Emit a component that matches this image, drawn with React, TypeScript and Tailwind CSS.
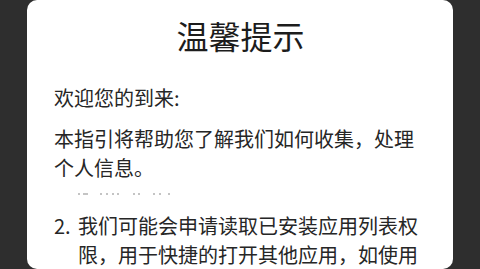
const dots = [
  { x: 78, w: 2 },
  { x: 83, w: 5 },
  { x: 100, w: 2 },
  { x: 106, w: 2 },
  { x: 112, w: 2 },
  { x: 117, w: 2 },
  { x: 133, w: 2 },
  { x: 138, w: 2 },
  { x: 153, w: 2 },
  { x: 159, w: 2 },
  { x: 168, w: 2 },
];

export default function App() {
  return (
    <div
      className="w-[480px] h-[269px] bg-[#2e2e2e] flex justify-center overflow-hidden"
      style={{ fontFamily: '"Noto Sans CJK SC", "Noto Sans", sans-serif' }}
    >
      <div className="w-[426px] h-[269px] bg-white rounded-[10px] overflow-hidden flex flex-col pl-[27px] pr-[26px]">
        {/* Title */}
        <h1 className="mt-[15px] h-[40px] leading-[40px] text-[32px] text-center text-[#1c1c1c] font-normal">
          温馨提示
        </h1>

        <div className="mt-[28px] text-[20px] leading-[29.5px] text-[#262626]">
          <p>欢迎您的到来:</p>
          <p className="mt-[11px]">本指引将帮助您了解我们如何收集，处理个人信息。</p>

          {/* faded line, mostly hidden */}
          <div className="relative h-[28px]">
            {dots.map((d, i) => (
              <span
                key={i}
                className="absolute top-[10px] h-[2px] bg-[#c4c4c4]"
                style={{ left: d.x - 54, width: d.w }}
              />
            ))}
          </div>

          <div className="flex leading-[29px]">
            <span className="w-[24px] shrink-0">2.</span>
            <p>我们可能会申请读取已安装应用列表权限，用于快捷的打开其他应用，如使用</p>
          </div>
        </div>
      </div>
    </div>
  );
}
